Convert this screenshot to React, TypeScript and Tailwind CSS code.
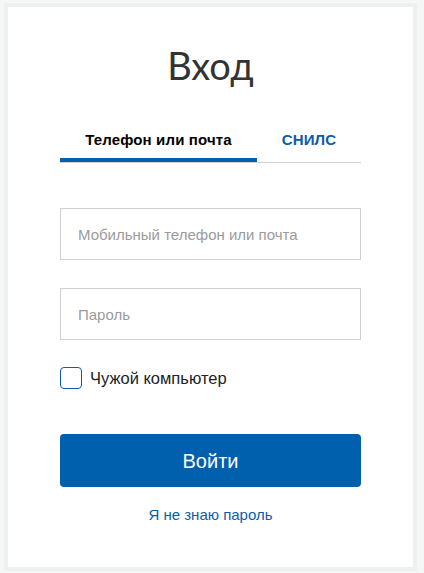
import React from "react";

export default function App() {
  return (
    <div className="min-h-[573px] w-[424px] bg-[#f5f6f6] pl-[4px] pt-[3px] font-['Liberation_Sans',Arial,sans-serif]">
      <div className="flex h-[568px] w-[413px] flex-col items-center border-4 border-[#eeefef] bg-white">
        <h1 className="mt-[34px] font-['Lato',sans-serif] text-[38px] leading-[48px] font-normal text-[#333333]">
          Вход
        </h1>
        <div className="mt-[41px] flex w-[301px] border-b border-[#d3d3d3]">
          <div className="w-[197px] shrink-0 whitespace-nowrap border-b-4 border-[#0060ae] pb-[8px] text-center text-[15px] leading-[20px] font-bold tracking-[0.15px] text-black">
            Телефон или почта
          </div>
          <div className="flex-1 whitespace-nowrap border-b-4 border-transparent pb-[8px] text-center text-[15px] leading-[20px] font-bold tracking-[0.15px] text-[#0b5ca9]">
            СНИЛС
          </div>
        </div>
        <input
          className="mt-[45px] h-[52px] w-[301px] border border-[#cfcfcf] px-[17px] text-[15px] text-[#333] outline-none placeholder:text-[#9b9b9b]"
          placeholder="Мобильный телефон или почта"
        />
        <input
          type="password"
          className="mt-[28px] h-[52px] w-[301px] border border-[#cfcfcf] px-[17px] text-[15px] text-[#333] outline-none placeholder:text-[#9b9b9b]"
          placeholder="Пароль"
        />
        <label className="mt-[27px] flex w-[301px] items-center gap-[8px]">
          <span className="h-[22px] w-[22px] rounded-[4px] border-[1.5px] border-[#0b5ca9] bg-white" />
          <span className="text-[16.5px] leading-[22px] text-[#222]">Чужой компьютер</span>
        </label>
        <button className="mt-[45px] h-[53px] w-[301px] rounded-[4px] bg-[#0060ae] text-[20px] text-white">
          Войти
        </button>
        <a className="mt-[18px] text-[15px] leading-[20px] text-[#0b5ca9]" href="#">
          Я не знаю пароль
        </a>
      </div>
    </div>
  );
}
